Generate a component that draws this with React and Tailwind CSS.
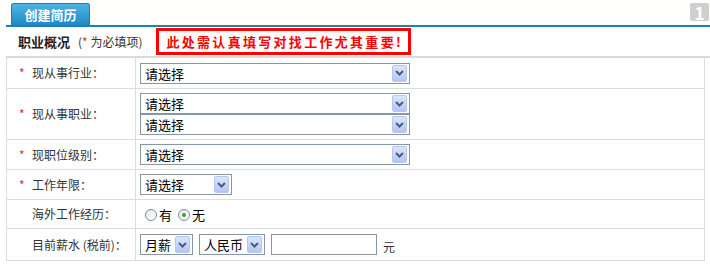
import React from "react";

const font = { fontFamily: '"Noto Sans CJK SC", "Liberation Sans", sans-serif' };

function Arrow() {
  return (
    <div className="w-[15px] h-[17px] rounded-[2px] border border-[#b7c7ec] bg-gradient-to-b from-[#dce5fb] to-[#b3c6f2] flex items-center justify-center">
      <svg width="9" height="6" viewBox="0 0 9 6">
        <path d="M1 1 L4.5 4.5 L8 1" fill="none" stroke="#4a5d80" strokeWidth="2" />
      </svg>
    </div>
  );
}

function Select({ w, text }) {
  return (
    <div
      className="h-[21px] border border-[#8497a3] bg-white flex items-center justify-between pl-[4px] pr-[2px]"
      style={{ width: w }}
    >
      <span className="text-[13px] leading-none text-black">{text}</span>
      <Arrow />
    </div>
  );
}

function Radio({ checked }) {
  return (
    <span className="w-[12px] h-[12px] rounded-full border border-[#7e8c9c] bg-gradient-to-br from-[#e6e9ee] to-white flex items-center justify-center">
      {checked && <span className="w-[4px] h-[4px] rounded-full bg-[#2fa52f]" />}
    </span>
  );
}

function Label({ req, children }) {
  return (
    <div className="w-[129px] shrink-0 border-r border-[#dcdcdc] flex items-center pl-[12px] text-[12px] text-[#333]">
      <span className="w-[13px] text-[#e0301e] text-[12px]">{req ? "*" : ""}</span>
      <span>{children}</span>
    </div>
  );
}

export default function App() {
  return (
    <div className="w-[710px] h-[272px] bg-white relative overflow-hidden" style={font}>
      {/* top tab bar */}
      <div className="ml-[6px] h-[27px] flex items-end border-b-2 border-[#1a82b5] bg-[#fffffb]">
        <div className="ml-[5px] w-[79px] h-[22px] rounded-t-[3px] bg-gradient-to-b from-[#4fb4e4] to-[#1d8ac2] border border-[#1a7fb3] border-b-0 flex items-center justify-center text-white text-[13px] font-bold">
          创建简历
        </div>
      </div>
      <div className="absolute top-[3px] right-[1px] w-[19px] h-[18px] bg-[#cfcfcf] rounded-[2px] flex items-center justify-center text-white text-[17px] font-bold leading-none">
        1
      </div>

      {/* header row */}
      <div className="ml-[6px] h-[31px] flex items-center border-b-2 border-[#dadada]">
        <span className="ml-[12px] text-[13px] font-bold text-[#222]">职业概况</span>
        <span className="ml-[8px] text-[12px] text-[#333]">
          (<span className="text-[#e0301e]">*</span> 为必填项)
        </span>
        <div className="ml-[14px] h-[27px] w-[255px] border-[3px] border-[#ff0000] flex items-center pl-[7px] text-[#ff0000] text-[13px] font-bold tracking-[2.3px] whitespace-nowrap overflow-hidden">
          此处需认真填写对找工作尤其重要!
        </div>
      </div>

      {/* table */}
      <div className="ml-[6px] w-[699px] border-l border-r border-[#dcdcdc]">
        <div className="h-[31px] flex border-b border-[#dcdcdc]">
          <Label req>现从事行业：</Label>
          <div className="flex items-center pl-[4px]">
            <Select w={270} text="请选择" />
          </div>
        </div>
        <div className="h-[51px] flex border-b border-[#dcdcdc]">
          <Label req>现从事职业：</Label>
          <div className="flex flex-col justify-center pl-[4px]">
            <Select w={270} text="请选择" />
            <Select w={270} text="请选择" />
          </div>
        </div>
        <div className="h-[30px] flex border-b border-[#dcdcdc]">
          <Label req>现职位级别：</Label>
          <div className="flex items-center pl-[4px]">
            <Select w={270} text="请选择" />
          </div>
        </div>
        <div className="h-[30px] flex border-b border-[#dcdcdc]">
          <Label req>工作年限：</Label>
          <div className="flex items-center pl-[4px]">
            <Select w={92} text="请选择" />
          </div>
        </div>
        <div className="h-[29px] flex border-b border-[#dcdcdc]">
          <Label>海外工作经历：</Label>
          <div className="flex items-center pl-[9px] pt-[2px] text-[13px] text-black">
            <Radio />
            <span className="ml-[2px]">有</span>
            <span className="ml-[6px]"><Radio checked /></span>
            <span className="ml-[2px]">无</span>
          </div>
        </div>
        <div className="h-[32px] flex border-b border-[#dcdcdc]">
          <Label>目前薪水 (税前)：</Label>
          <div className="flex items-center pl-[4px]">
            <Select w={53} text="月薪" />
            <div className="ml-[6px]">
              <Select w={66} text="人民币" />
            </div>
            <div className="ml-[6px] w-[106px] h-[21px] border border-[#8497a3] bg-white" />
            <span className="ml-[6px] mt-[4px] text-[12px] text-[#333]">元</span>
          </div>
        </div>
      </div>
    </div>
  );
}
